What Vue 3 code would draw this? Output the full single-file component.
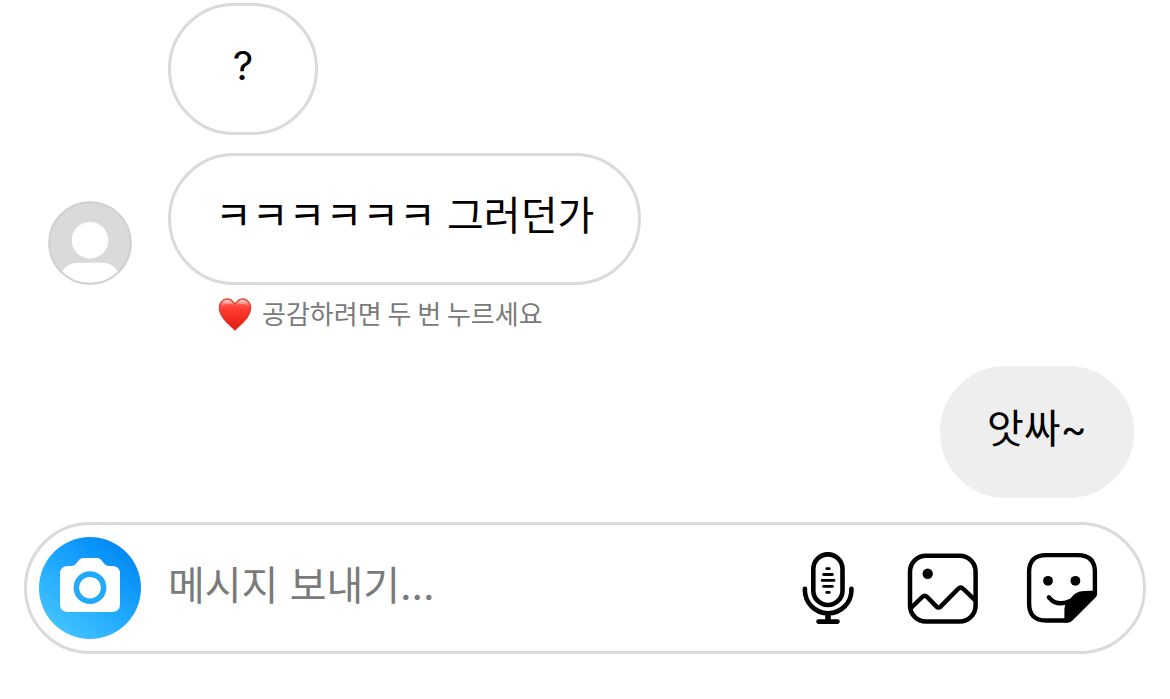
<script setup>
import { ref } from 'vue'

const draft = ref('')
</script>

<template>
  <main class="chat">
    <section class="thread" aria-label="대화">
      <div class="row">
        <div class="avatar-slot"></div>
        <p class="bubble received">?</p>
      </div>

      <div class="row">
        <div class="avatar-slot">
          <svg class="avatar" viewBox="0 0 84 84" aria-hidden="true">
            <defs>
              <clipPath id="avatar-clip"><circle cx="42" cy="42" r="41" /></clipPath>
            </defs>
            <circle cx="42" cy="42" r="41.5" fill="#dadada" />
            <g clip-path="url(#avatar-clip)" fill="#fff">
              <circle cx="42" cy="39.2" r="18.3" />
              <path d="M12 74C16 66 22 61.8 30 61.8H54C62 61.8 68 66 72 74V84H12Z" />
            </g>
            <circle cx="42" cy="42" r="40.8" fill="none" stroke="#d0d0d0" stroke-width="2" />
          </svg>
        </div>
        <p class="bubble received">ㅋㅋㅋㅋㅋㅋ 그러던가</p>
      </div>

      <p class="hint">
        <svg class="heart" viewBox="0 0 34 36" aria-hidden="true">
          <defs>
            <linearGradient id="heart-fill" x1="0" y1="0" x2="0" y2="1">
              <stop offset="0" stop-color="#ff6a5c" />
              <stop offset="0.35" stop-color="#ff3b30" />
              <stop offset="1" stop-color="#e0190f" />
            </linearGradient>
            <linearGradient id="heart-shine" x1="0" y1="0" x2="0" y2="1">
              <stop offset="0" stop-color="#fff" stop-opacity="0.75" />
              <stop offset="1" stop-color="#fff" stop-opacity="0" />
            </linearGradient>
          </defs>
          <path d="M17 33.4C14.5 30 1.2 21.5 1.2 10.8C1.2 5.3 4.8 1.8 9.3 1.8C12.8 1.8 15.7 3.9 17 7.4C18.3 3.9 21.2 1.8 24.7 1.8C29.2 1.8 32.8 5.3 32.8 10.8C32.8 21.5 19.5 30 17 33.4Z" fill="url(#heart-fill)" stroke="#c8231c" stroke-width="0.8" />
          <path d="M3.2 9.5C3.4 5.5 6 3 9.4 3C12.2 3 14.5 5 15.6 8C12 6.4 7 6.8 3.2 9.5ZM30.8 9.5C30.6 5.5 28 3 24.6 3C21.8 3 19.5 5 18.4 8C22 6.4 27 6.8 30.8 9.5Z" fill="url(#heart-shine)" />
        </svg>
        <span class="hint-text">공감하려면 두 번 누르세요</span>
      </p>

      <div class="row own">
        <p class="bubble sent">앗싸~</p>
      </div>
    </section>

    <form class="composer" @submit.prevent>
      <button class="camera" type="button" aria-label="카메라">
        <svg viewBox="0 0 102 102" aria-hidden="true">
          <path d="M29 29H32C35 29 36.5 27.6 38.2 25.2C40 22.5 41.8 21 45 21H57.5C60.5 21 62.2 22.6 64 25.2C65.8 27.6 67 29 70 29H73Q81 29 81 37V67Q81 75 73 75H29Q21 75 21 67V37Q21 29 29 29Z" fill="#fff" />
          <circle cx="51" cy="50.7" r="13.6" fill="none" stroke="#22a9fc" stroke-width="5.6" />
        </svg>
      </button>
      <input v-model="draft" class="field" type="text" placeholder="메시지 보내기..." aria-label="메시지 보내기" />
      <div class="actions">
        <button class="action voice" type="button" aria-label="음성 메시지">
          <svg viewBox="0 0 60 72" fill="none" stroke="#000" stroke-linecap="round" aria-hidden="true">
            <g stroke-width="4.6">
              <rect x="15.3" y="2.4" width="29.2" height="50.6" rx="14.6" />
              <path d="M6.9 36.8V38.2A23.2 23 0 0 0 53.4 38.2V36.8M20.5 69.6H39.5" />
            </g>
            <path d="M30 61V69" stroke-width="5.6" stroke-linecap="butt" />
            <path d="M28.7 16.7H31.3M25.6 22.5H34.4M24.2 28.4H36M25.6 34.4H34.4M28.7 40.4H31.3" stroke-width="2.8" />
          </svg>
        </button>
        <button class="action" type="button" aria-label="사진">
          <svg viewBox="0 0 72 72" fill="none" stroke="#000" stroke-width="4.5" stroke-linejoin="round" aria-hidden="true">
            <rect x="4" y="3.7" width="65.6" height="65.8" rx="16" />
            <path d="M4.5 56.5L16.2 45Q18.7 42.6 21.2 45L30.3 54.4Q32.5 56.8 34.8 54.4L52 37Q54.7 34.4 57.4 37L69.5 48.5" />
            <circle cx="21.7" cy="21.7" r="5.2" fill="#000" stroke="none" />
          </svg>
        </button>
        <button class="action" type="button" aria-label="스티커">
          <svg viewBox="0 0 72 72" fill="none" stroke="#000" stroke-width="4.4" stroke-linecap="round" stroke-linejoin="round" aria-hidden="true">
            <path d="M41 68.5H20.1Q3.1 68.5 3.1 51.5V20.1Q3.1 3.1 20.1 3.1H51.9Q68.9 3.1 68.9 20.1V41" />
            <path d="M22.9 45.3C28 51.6 35.5 52.8 43.5 49.2" />
            <path d="M71 38.5V42.5Q71 44 69.5 45.5L46.5 68.4Q44.3 70.6 41 70.6H38.4V59C38.4 54 39.7 51.5 41.8 49.2L48 42.5C51 39.9 54.5 38.9 59 38.9Z" fill="#000" stroke="none" />
            <circle cx="22" cy="28.8" r="4.9" fill="#000" stroke="none" />
            <circle cx="49.4" cy="28.8" r="4.9" fill="#000" stroke="none" />
          </svg>
        </button>
      </div>
    </form>
  </main>
</template>

<style>
body {
  margin: 0;
  background: #fff;
}
</style>

<style scoped>
.chat {
  box-sizing: border-box;
  padding: 3px 24px 24px;
  color: #000;
  font-family: Inter, "Noto Sans CJK KR", sans-serif;
}

.thread {
  display: flex;
  flex-direction: column;
}

.row {
  display: flex;
  align-items: flex-end;
  margin-bottom: 18px;
}

.avatar-slot {
  flex: none;
  width: 84px;
  margin: 0 36px 0 24px;
}

.avatar {
  display: block;
  width: 84px;
  height: 84px;
}

.bubble {
  box-sizing: border-box;
  min-width: 150px;
  margin: 0;
  padding: 33px 44px 39px;
  border: 3px solid #dadada;
  border-radius: 66px;
  font-size: 40px;
  line-height: 54px;
  text-align: center;
}

.sent {
  border-color: #eee;
  background: #eee;
}

.own {
  justify-content: flex-end;
  margin: 0 12px 24px 0;
}

.hint {
  display: flex;
  align-items: center;
  gap: 10px;
  margin: -6px 0 33px 194px;
  color: #7a7a7a;
  font-family: "Noto Sans CJK KR", sans-serif;
  font-size: 26px;
  line-height: 32px;
}

.hint-text {
  padding-bottom: 4px;
}

.heart {
  flex: none;
  width: 34px;
  height: 36px;
}

.composer {
  display: flex;
  align-items: center;
  padding: 12px 45px 12px 12px;
  border: 3px solid #dadada;
  border-radius: 66px;
}

button {
  padding: 0;
  border: 0;
  background: none;
  cursor: pointer;
}

button svg {
  display: block;
  width: 100%;
  height: 100%;
}

.camera {
  flex: none;
  width: 102px;
  height: 102px;
  border-radius: 50%;
  background: linear-gradient(38deg, #48c6ff 8%, #1fa9ff 48%, #0088f5 88%);
}

.field {
  flex: 1;
  min-width: 0;
  height: 60px;
  margin: 0 27px;
  padding: 0 0 6px;
  border: 0;
  outline: 0;
  background: none;
  color: #000;
  font: 40px/54px Inter, "Noto Sans CJK KR", sans-serif;
}

.field::placeholder {
  color: #7a7a7a;
  opacity: 1;
}

.actions {
  display: flex;
  flex: none;
  gap: 48px;
}

.action {
  width: 72px;
  height: 72px;
}

.voice {
  width: 60px;
}
</style>
